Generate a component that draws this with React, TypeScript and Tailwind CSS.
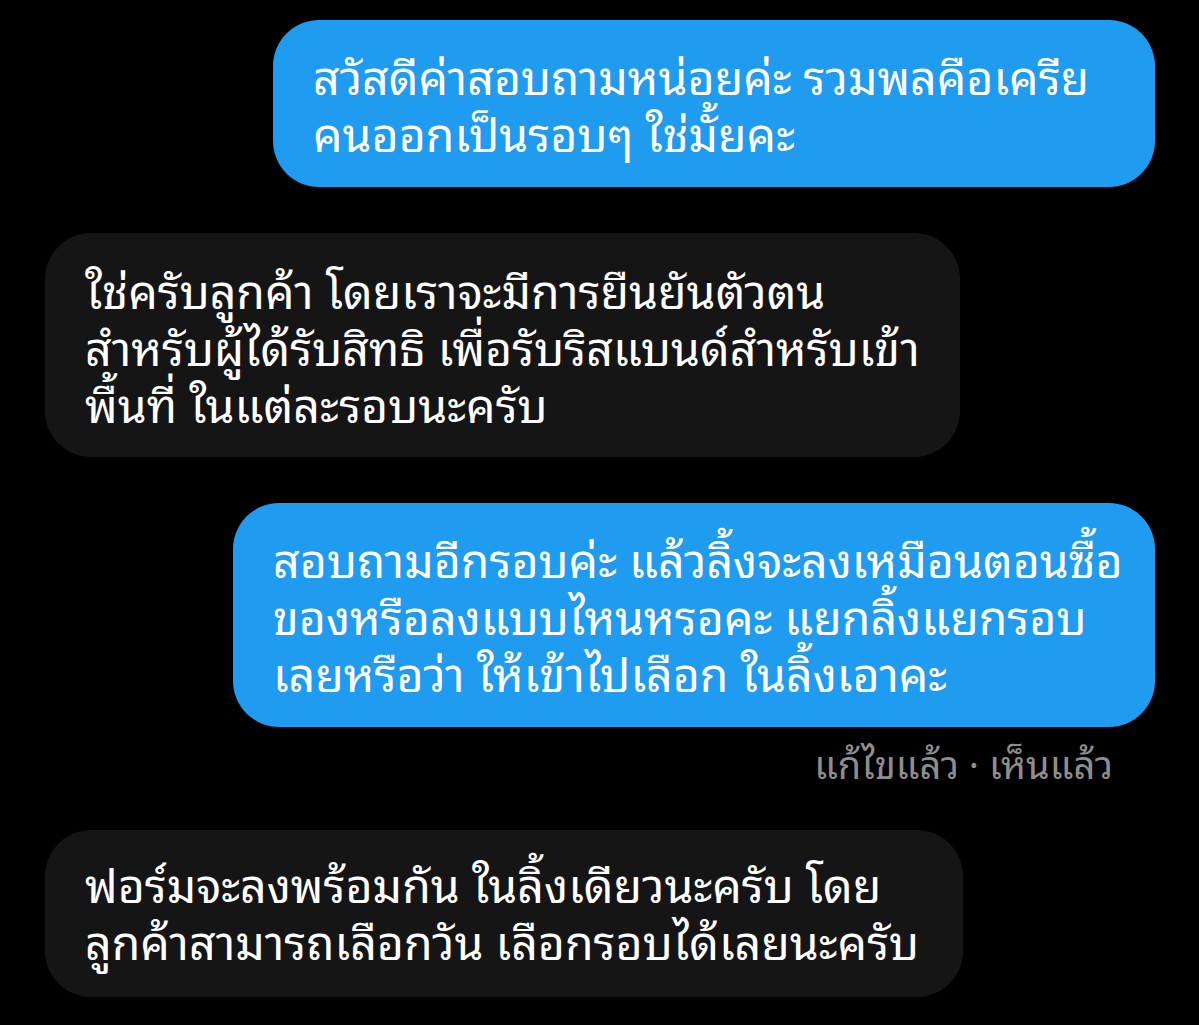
import React from "react";

const font = { fontFamily: '"Noto Sans Thai Looped", "Noto Sans Thai", "Noto Sans", "DejaVu Sans", sans-serif' };

export default function App() {
  return (
    <div className="w-[1199px] h-[1025px] bg-black overflow-hidden flex flex-col text-white" style={font}>
      <div className="flex justify-end pr-[44px] pt-[20px]">
        <div className="w-[882px] h-[167px] rounded-[46px] bg-[#1f9bf0] pl-[40px] pt-[26px] text-[46.5px] leading-[57px] whitespace-nowrap">
          <div>สวัสดีค่าสอบถามหน่อยค่ะ รวมพลคือเครีย</div>
          <div>คนออกเป็นรอบๆ ใช่มั้ยคะ</div>
        </div>
      </div>
      <div className="flex justify-start pl-[45px] pt-[46px]">
        <div className="w-[915px] h-[224px] rounded-[46px] bg-[#151515] pl-[40px] pt-[27px] text-[46.5px] leading-[57px] whitespace-nowrap">
          <div>ใช่ครับลูกค้า โดยเราจะมีการยืนยันตัวตน</div>
          <div>สำหรับผู้ได้รับสิทธิ เพื่อรับริสแบนด์สำหรับเข้า</div>
          <div>พื้นที่ ในแต่ละรอบนะครับ</div>
        </div>
      </div>
      <div className="flex justify-end pr-[44px] pt-[46px]">
        <div className="w-[922px] h-[224px] rounded-[46px] bg-[#1f9bf0] pl-[40px] pt-[26px] text-[46.5px] leading-[57px] whitespace-nowrap">
          <div>สอบถามอีกรอบค่ะ แล้วลิ้งจะลงเหมือนตอนซื้อ</div>
          <div>ของหรือลงแบบไหนหรอคะ แยกลิ้งแยกรอบ</div>
          <div>เลยหรือว่า ให้เข้าไปเลือก ในลิ้งเอาคะ</div>
        </div>
      </div>
      <div className="flex justify-end pr-[86px] pt-[12px] text-[38px] leading-[46px] text-[#8e8e8e]">
        แก้ไขแล้ว · เห็นแล้ว
      </div>
      <div className="flex justify-start pl-[45px] pt-[45px]">
        <div className="w-[918px] h-[167px] rounded-[46px] bg-[#151515] pl-[40px] pt-[24px] text-[46.5px] leading-[57px] whitespace-nowrap">
          <div>ฟอร์มจะลงพร้อมกัน ในลิ้งเดียวนะครับ โดย</div>
          <div>ลูกค้าสามารถเลือกวัน เลือกรอบได้เลยนะครับ</div>
        </div>
      </div>
    </div>
  );
}
